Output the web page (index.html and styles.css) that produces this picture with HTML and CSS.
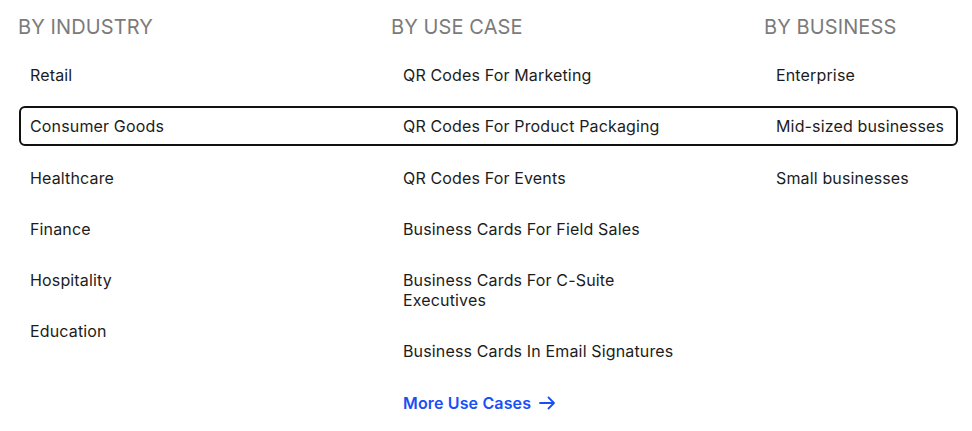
FILE: index.html
```html
<!DOCTYPE html>
<html>
<head>
<meta charset="utf-8">
<link rel="stylesheet" href="styles.css">
</head>
<body>
<div class="menu">
  <div class="col">
    <h3 class="heading">BY INDUSTRY</h3>
    <ul class="list">
      <li class="item">Retail</li>
      <li class="item">Consumer Goods</li>
      <li class="item">Healthcare</li>
      <li class="item">Finance</li>
      <li class="item">Hospitality</li>
      <li class="item">Education</li>
    </ul>
  </div>
  <div class="col">
    <h3 class="heading">BY USE CASE</h3>
    <ul class="list">
      <li class="item">QR Codes For Marketing</li>
      <li class="item">QR Codes For Product Packaging</li>
      <li class="item">QR Codes For Events</li>
      <li class="item">Business Cards For Field Sales</li>
      <li class="item narrow">Business Cards For C-Suite Executives</li>
      <li class="item">Business Cards In Email Signatures</li>
      <li class="item more">More Use Cases <svg class="arrow" width="17" height="14" viewBox="0 0 17 14"><path d="M1 7h14M9.5 1.5L15 7l-5.5 5.5" fill="none" stroke="currentColor" stroke-width="1.8" stroke-linecap="round" stroke-linejoin="round"/></svg></li>
    </ul>
  </div>
  <div class="col">
    <h3 class="heading">BY BUSINESS</h3>
    <ul class="list">
      <li class="item">Enterprise</li>
      <li class="item">Mid-sized businesses</li>
      <li class="item">Small businesses</li>
    </ul>
  </div>
  <div class="focus-ring"></div>
</div>
</body>
</html>
```
FILE: styles.css
```css
* { box-sizing: border-box; }
html, body { margin: 0; padding: 0; background: #fff; }
body { font-family: Inter, "Noto Sans", sans-serif; color: #1c1c1c; }
.menu {
  position: relative;
  display: grid;
  grid-template-columns: 373px 373px 1fr;
  width: 939px;
  margin-left: 18px;
  padding-top: 15px;
}
.heading {
  margin: 0;
  font-size: 20px;
  line-height: 24px;
  font-weight: 400;
  color: #7b7b7b;
  letter-spacing: 0.1px;
}
.list {
  list-style: none;
  margin: 16px 0 0;
  padding: 0;
  display: flex;
  flex-direction: column;
  gap: 11.25px;
}
.item {
  padding: 10px 12px;
  font-size: 16px;
  line-height: 20px;
  letter-spacing: 0.15px;
  color: #1c1c1c;
}
.narrow { max-width: 240px; }
.more {
  color: #1a4ff5;
  font-weight: 600;
  display: flex;
  align-items: center;
  gap: 8px;
}
.arrow { display: block; }
.focus-ring {
  position: absolute;
  left: 1px;
  top: 106px;
  width: 939px;
  height: 40px;
  border: 2px solid #111;
  border-radius: 6px;
  pointer-events: none;
}
```
